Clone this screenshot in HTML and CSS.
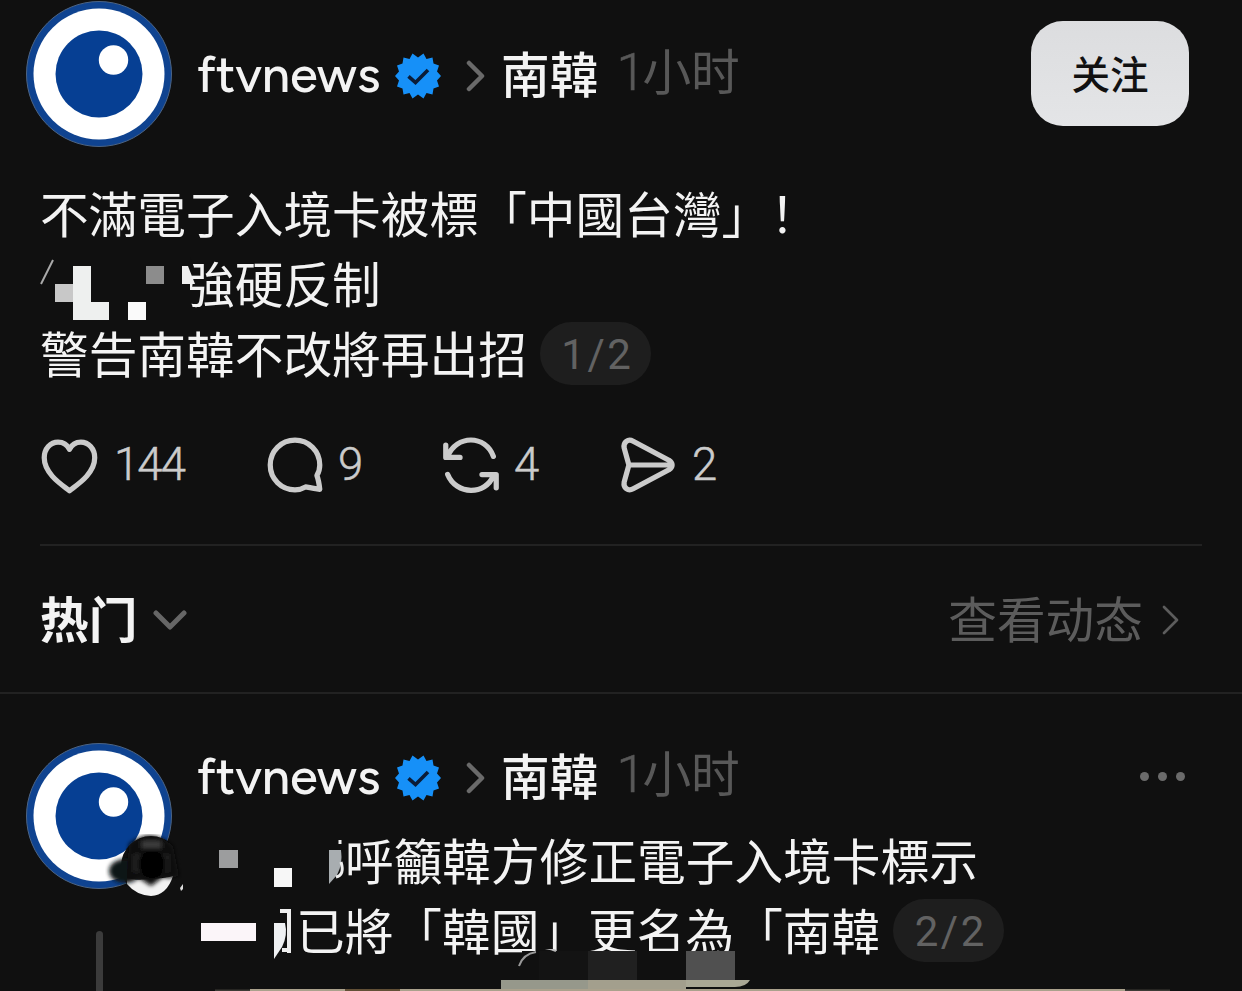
FILE: index.html
```html
<!DOCTYPE html>
<html lang="zh-CN">
<head>
    <meta charset="UTF-8">
    <meta name="viewport" content="width=device-width, initial-scale=1.0">
    <title>ftvnews</title>
    <link rel="stylesheet" href="styles.css">
</head>
<body>
    <!-- shared icons -->
    <svg class="sprite" width="0" height="0">
        <symbol id="logo" viewBox="0 0 146 146">
            <circle cx="73" cy="73" r="72.5" fill="#0f4390" stroke="#4c6484"/>
            <circle cx="73" cy="73" r="65.5" fill="#fff"/>
            <circle cx="73" cy="73" r="43.5" fill="#063f93"/>
            <circle cx="87.500" cy="59" r="14.700" fill="#fff"/>
        </symbol>
        <symbol id="verified" viewBox="0 0 46 46">
            <path fill="#1690f8" d="M23 4.500 L28.500 0.500 L31.500 6 L37.500 4.500 L38.500 10.500 L44 12.500 L42 18.500 L46 23 L42 27.500 L44 33.500 L38.500 35.500 L37.500 41.500 L31.500 40 L28.500 45.500 L23 41.500 L17.500 45.500 L14.500 40 L8.500 41.500 L7.500 35.500 L2 33.500 L4 27.500 L0 23 L4 18.500 L2 12.500 L7.500 10.500 L8.500 4.500 L14.500 6 L17.500 0.500 Z"/>
            <path fill="none" stroke="#0b1c38" stroke-width="3.600" d="M13.500 23.300 L20.500 29.500 L33 17"/>
        </symbol>
        <symbol id="chevron" viewBox="0 0 20 34">
            <path fill="none" stroke="currentColor" stroke-linecap="round" stroke-linejoin="round" d="M3 4 L16 17 L3 30"/>
        </symbol>
    </svg>

    <main class="thread">
        <article class="post main-post">
            <header class="post-header">
                <svg class="avatar"><use href="#logo"/></svg>
                <div class="meta">
                    <span class="username">ftvnews</span>
                    <svg class="verified"><use href="#verified"/></svg>
                    <svg class="crumb"><use href="#chevron"/></svg>
                    <span class="topic">南韓</span>
                    <span class="time"><span class="one">1</span>小时</span>
                </div>
                <button class="follow">关注</button>
            </header>
            <div class="text">
                <p>不滿電子入境卡被標「中國台灣」！</p>
                <p class="line"><svg class="mosaic three" viewBox="0 0 146 70">
                    <path fill="#101010" d="M140 10h10l4 10 -4 14v26h-10z"/>
                    <path d="M1 37 L13 13" stroke="#aaa" stroke-width="2"/>
                    <path fill="#c8c8c8" d="M15 37h18v18H15z"/>
                    <path fill="#eef0ef" d="M33 19h18v36h18v18H33z"/>
                    <path fill="#8c8c8c" d="M106 19h18v18h-18z"/>
                    <path fill="#fafafa" d="M88 55h18v18H88z"/>
                    <path fill="#f0f0f0" d="M142 19h6l7 18h-13z"/>
                </svg><span>強硬反制</span></p>
                <p class="line"><span>警告南韓不改將再出招</span><span class="page">1/2</span></p>
            </div>
            <div class="actions">
                <span class="action like">
                    <svg viewBox="-2 -1.500 63 63"><path d="M30 57 C24 52 3.500 40 3.500 22.500 C3.500 13 10 6 18 6 C24 6 28 9.500 30 13.500 C32 9.500 36 6 42 6 C50 6 56.500 13 56.500 22.500 C56.500 40 36 52 30 57 Z"/></svg>
                    <span>144</span>
                </span>
                <span class="action comment">
                    <svg viewBox="-1.500 -1.500 63 63"><path d="M53 41 C55.500 37 56 34 56 30 C56 15.500 44.500 4 30 4 C15.500 4 4 15.500 4 30 C4 44.500 15.500 56 30 56 C34 56 37.500 55 41 53 C46 54 51 55 56 55.500 C55.500 51 54.500 45 53 41 Z"/></svg>
                    <span>9</span>
                </span>
                <span class="action repost">
                    <svg viewBox="-1 -1.500 63 63"><path d="M4 9 V22 H19 M6 21 C15 -2 46 -2 54 21 M6 40 C15 62 46 62 54 41 M42 40 H57 V54"/></svg>
                    <span>4</span>
                </span>
                <span class="action share">
                    <svg viewBox="-1.500 -1.500 63 63"><path d="M11 30 L6 12 C5 6 10 2 15.500 5 L53 25 C57.500 28 57.500 32 53 35 L15.500 55 C10 58 5 54 6 48 Z M11 30 H55"/></svg>
                    <span>2</span>
                </span>
            </div>
        </article>

        <div class="sort-bar">
            <div class="sort"><span>热门</span>
                <svg viewBox="0 0 34 20"><path d="M3 3 L17 17 L31 3"/></svg>
            </div>
            <div class="activity"><span>查看动态</span> <svg><use href="#chevron"/></svg></div>
        </div>

        <article class="post reply">
            <div class="avatar-col">
                <svg class="avatar"><use href="#logo"/></svg>
                <!-- small badge on the avatar corner -->
                <svg class="avatar-badge" viewBox="0 0 80 66">
                    <defs>
                        <filter id="soft" x="-20%" y="-20%" width="140%" height="140%"><feGaussianBlur stdDeviation="2.200"/></filter>
                    </defs>
                    <circle cx="46" cy="32" r="30" fill="#111"/>
                    <path fill="#f2f2f2" d="M22 44 Q30 47 46 45 Q62 44 68 42 Q62 61 46 62 Q31 61 22 50 Z"/>
                    <g filter="url(#soft)">
                        <ellipse cx="20" cy="37" rx="16" ry="12" fill="#101217"/>
                        <path fill="#0d0d0d" d="M24 10 Q46 -8 68 12 L74 42 L64 44 L58 43 L46 52 L34 44 L22 45 Z"/>
                        <path fill="#3c3c3c" d="M37 7h19v7H37z"/>
                        <path fill="#242424" d="M28 20h36v18H28z"/>
                        <ellipse cx="47" cy="30" rx="14" ry="14" fill="#050505"/>
                    </g>
                    <path d="M75 54 l3 -4 v5 l-2 2z" fill="#ddd"/>
                </svg>
                <div class="thread-line"></div>
            </div>
            <div class="reply-body">
                <div class="reply-top">
                    <div class="meta">
                        <span class="username">ftvnews</span>
                        <svg class="verified"><use href="#verified"/></svg>
                        <svg class="crumb"><use href="#chevron"/></svg>
                        <span class="topic">南韓</span>
                        <span class="time"><span class="one">1</span>小时</span>
                    </div>
                    <div class="more"><i></i><i></i><i></i></div>
                </div>
                <div class="text">
                    <p class="line"><svg class="mosaic three" viewBox="0 0 146 70">
                        <path fill="#9c9d9e" d="M20 26h19v18H20z"/>
                        <path fill="#f7f7f7" d="M75 44h18v19H75z"/>
                        <path fill="#a8adb0" d="M130 26h12q2 14 -4 25l-8 9z"/>
                        <path fill="none" stroke="#eee" stroke-width="3" d="M141 16 v4 M142 38 q4 13 -5 15"/>
                    </svg><span>呼籲韓方修正電子入境卡標示</span></p>
                    <p class="line"><svg class="mosaic two" viewBox="0 0 97 70">
                        <path fill="#fbf5f9" d="M2 29h55v18H2z"/>
                        <path fill="#eff1f3" d="M75 29h11q3 12 -3 24l-8 12z"/>
                        <path fill="none" stroke="#eee" stroke-width="4" d="M81 17 H90 V59 M90 56 H83"/>
                    </svg><span>已將「韓國」更名為「南韓</span><span class="page">2/2</span></p>
                </div>
            </div>
        </article>

        <!-- top edge of the attached picture with the blocks lying over it -->
        <svg class="media-edge" viewBox="0 0 1242 42">
            <path fill="#101010" d="M522 2 H750 V31 H522z"/>
            <path fill="#131313" d="M539 2h49v29h-49z"/>
            <path fill="#202020" d="M588 2h49v29h-49z"/>
            <path fill="#505050" d="M686 2h49v29h-49z"/>
            <path fill="none" stroke="#999" stroke-width="2" d="M519 17 Q523 5 536 3"/>
            <path fill="none" stroke="#bbb" stroke-width="2" d="M545 -1 Q552 0 556 2"/>
            <path fill="#3c3b35" d="M215 40.500h955v1.500H215z"/>
            <path fill="#aaa18c" d="M250 40h875v2H250z"/>
            <path fill="#625036" d="M345 40h55v2h-55z"/>
            <path fill="#96988b" d="M501 31H588V40H501z"/>
            <path fill="#a39f8d" d="M588 31H686V40H588z"/>
            <path fill="#aaa895" d="M686 31H750Q746 38 735 38H686z"/>
        </svg>
    </main>
</body>
</html>
```
FILE: styles.css
```css
:root {
    --bg: #101010;
    --text: #f3f3f3;
    --muted: #5c5c5c;
    --icon: #cbcbcb;
    --line: #222222;
}

* {
    margin: 0;
    padding: 0;
    box-sizing: border-box;
}

body {
    background: var(--bg);
    color: var(--text);
    font-family: "Noto Sans CJK SC", sans-serif;
    font-size: 48.7px;
    line-height: 70px;
    overflow: hidden;
}

svg {
    display: block;
    flex-shrink: 0;
}

.sprite {
    display: none;
}

.thread {
    position: relative;
    height: 991px;
    overflow: hidden;
}

.post-header {
    display: flex;
    height: 147px;
    padding: 1px 53px 0 26px;
}

.avatar {
    width: 146px;
    height: 146px;
}

.meta {
    display: flex;
    align-items: center;
    height: 70px;
    white-space: nowrap;
}

.post-header .meta {
    margin: 37px 0 0 25px;
}

.username {
    width: 184px;
    margin-top: 3px;
    font-family: Figtree, "Noto Sans", sans-serif;
    font-size: 50.5px;
    font-weight: 500;
    letter-spacing: -0.1px;
}

.verified {
    width: 46px;
    height: 46px;
    margin: 5px 25px 0 14px;
}

.crumb {
    width: 20px;
    height: 34px;
    margin: 5px 15px 0 0;
    color: #6a6a6a;
    stroke-width: 4.5px;
}

.topic {
    font-weight: 500;
    margin-bottom: 3px;
}

.time {
    display: flex;
    margin: 0 0 4px 18px;
    color: #585858;
}

.one {
    width: 26px;
    padding-top: 4px;
    font-family: Roboto, sans-serif;
    font-size: 52px;
    font-weight: 300;
    -webkit-text-stroke: 0.6px #585858;
}

.follow {
    width: 158px;
    height: 105px;
    margin: 20px 0 0 auto;
    padding-bottom: 3px;
    border: none;
    border-radius: 32px;
    background: linear-gradient(#dcdddf, #e4e5e7);
    color: #111;
    font-family: inherit;
    font-size: 38.5px;
    font-weight: 500;
}

.main-post .text {
    padding: 30px 0 0 40px;
}

.text {
    white-space: nowrap;
}

.line {
    display: flex;
    align-items: center;
    height: 70px;
}

/* paints over the first glyph of the text that follows */
.mosaic {
    position: relative;
    z-index: 1;
    height: 70px;
    overflow: visible;
}

.three {
    width: 146px;
}

.two {
    width: 97px;
}

.page {
    width: 111px;
    height: 63px;
    margin: 3px 0 0 13px;
    padding-left: 4px;
    border-radius: 32px;
    background: #1e1e1e;
    color: #626262;
    font-family: Roboto, sans-serif;
    font-size: 42px;
    letter-spacing: 2.5px;
    line-height: 66px;
    text-align: center;
}

.actions {
    display: flex;
    height: 157px;
    padding: 48px 0 0 39px;
    color: var(--icon);
    font-family: Roboto, sans-serif;
    font-size: 45.5px;
    font-weight: 300;
    letter-spacing: -1.9px;
    -webkit-text-stroke: 0.5px var(--icon);
}

.action {
    display: flex;
    height: 60px;
    line-height: 60px;
}

.action svg {
    width: 60px;
    height: 60px;
    margin-right: 15px;
    fill: none;
    stroke: currentColor;
    stroke-width: 5.5px;
    stroke-linecap: round;
    stroke-linejoin: round;
}

.like {
    width: 226px;
}

.comment {
    width: 176px;
}

.repost {
    width: 176px;
}

.comment svg,
.repost svg {
    margin-right: 13px;
}

.sort-bar {
    display: flex;
    justify-content: space-between;
    position: relative;
    height: 150px;
    padding: 41px 61px 0 40px;
    border-bottom: 2px solid var(--line);
}

/* inset divider under the actions */
.sort-bar::before {
    content: "";
    position: absolute;
    top: 0;
    left: 40px;
    right: 40px;
    height: 2px;
    background: var(--line);
}

.sort,
.activity {
    display: flex;
    align-items: center;
    height: 70px;
}

.sort span,
.activity span {
    margin-bottom: 6px;
}

.sort {
    font-weight: 700;
}

.sort svg {
    width: 34px;
    height: 20px;
    margin-left: 16px;
    fill: none;
    stroke: #666;
    stroke-width: 5px;
    stroke-linecap: round;
    stroke-linejoin: round;
}

.activity {
    color: var(--muted);
}

.activity svg {
    width: 20px;
    height: 34px;
    margin-left: 18px;
    stroke-width: 2.7px;
}

.reply {
    display: flex;
    padding: 49px 57px 0 26px;
}

.avatar-col {
    position: relative;
    width: 146px;
    margin-right: 25px;
}

.avatar-badge {
    position: absolute;
    top: 91px;
    left: 79px;
    width: 80px;
    height: 66px;
}

.thread-line {
    width: 7px;
    height: 90px;
    margin: 42px auto 0;
    border-radius: 4px 4px 0 0;
    background: #3b3b3b;
}

.reply-body {
    flex: 1;
}

.reply-top {
    display: flex;
    justify-content: space-between;
    height: 81px;
}

.reply-top .meta {
    margin-top: -3px;
}

.reply .text {
    padding-left: 2px;
}

.more {
    display: flex;
    gap: 9px;
    padding-top: 29px;
}

.more i {
    width: 9px;
    height: 9px;
    border-radius: 50%;
    background: #6b6b6b;
}

.media-edge {
    position: absolute;
    left: 0;
    bottom: 0;
    width: 1242px;
    height: 42px;
}
```
